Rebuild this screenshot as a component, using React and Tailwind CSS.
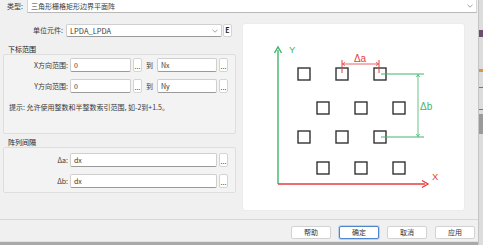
import React from 'react';

const Chevron = () => (
  <svg width="6" height="4" viewBox="0 0 6 4" className="shrink-0">
    <path d="M0.5 0.8 L3 3.2 L5.5 0.8" fill="none" stroke="#8a8a8a" strokeWidth="0.8" />
  </svg>
);

const Field = ({ value, className }) => (
  <div className={`h-[14px] bg-white border border-[#cfcfcf] border-b-[#9a9a9a] rounded-[2px] flex items-center px-[3px] text-[7px] text-[#333] ${className}`}>
    {value}
  </div>
);

const Dots = () => (
  <div className="w-[9px] h-[14px] ml-[2px] bg-white border border-[#d4d4d4] rounded-[2px] flex items-end justify-center pb-[1px] text-[7px] leading-[7px] text-[#333]">
    ...
  </div>
);

const Diagram = () => {
  const green = '#3fb56c';
  const red = '#e63d3f';
  const squares = [
    [55, 44], [93, 44], [131, 44],
    [74, 78], [112, 78], [150, 78],
    [55, 107], [93, 107], [131, 107],
    [74, 138], [112, 138], [150, 138],
  ];
  return (
    <svg width="223" height="188" viewBox="0 0 223 188">
      {/* axes */}
      <line x1="35" y1="160" x2="35" y2="26" stroke={green} strokeWidth="1.4" />
      <path d="M31.5 29 L35 23 L38.5 29" fill="none" stroke={green} strokeWidth="1.4" />
      <text x="46" y="29" fontSize="9.5" fill={green} fontFamily="Liberation Sans, sans-serif">Y</text>
      <line x1="35" y1="160" x2="182" y2="160" stroke={red} strokeWidth="1.4" />
      <path d="M179 156.5 L185 160 L179 163.5" fill="none" stroke={red} strokeWidth="1.4" />
      <text x="189" y="156" fontSize="9.5" fill={red} fontFamily="Liberation Sans, sans-serif">X</text>

      {squares.map(([x, y], i) => (
        <rect key={i} x={x} y={y} width="12" height="12" fill="none" stroke="#333" strokeWidth="1.4" />
      ))}

      {/* delta a */}
      <line x1="99" y1="36" x2="99" y2="49" stroke={red} strokeWidth="1" />
      <line x1="136" y1="36" x2="136" y2="49" stroke={red} strokeWidth="1" />
      <line x1="99.5" y1="40" x2="135.5" y2="40" stroke={red} strokeWidth="0.8" />
      <path d="M102 38.3 L99.5 40 L102 41.7" fill="none" stroke={red} strokeWidth="0.8" />
      <path d="M133 38.3 L135.5 40 L133 41.7" fill="none" stroke={red} strokeWidth="0.8" />
      <text x="117" y="38" fontSize="10" fill={red} textAnchor="middle" fontFamily="Liberation Sans, sans-serif">Δa</text>

      {/* delta b */}
      <line x1="138" y1="50" x2="181" y2="50" stroke={green} strokeWidth="1" />
      <line x1="138" y1="113" x2="181" y2="113" stroke={green} strokeWidth="1" />
      <line x1="175" y1="50.5" x2="175" y2="112.5" stroke={green} strokeWidth="0.8" />
      <path d="M173.3 53 L175 50.5 L176.7 53" fill="none" stroke={green} strokeWidth="0.8" />
      <path d="M173.3 110 L175 112.5 L176.7 110" fill="none" stroke={green} strokeWidth="0.8" />
      <text x="177" y="86" fontSize="10" fill={green} fontFamily="Liberation Sans, sans-serif">Δb</text>
    </svg>
  );
};

const Button = ({ label, primary }) => (
  <div
    className={`w-[40px] h-[13px] rounded-[2px] bg-white flex items-center justify-center text-[7px] text-[#333] ${
      primary ? 'border border-[#4f86cc] shadow-[0_0_0_1px_#bcd3ee]' : 'border border-[#d2d2d2]'
    }`}
  >
    {label}
  </div>
);

export default function App() {
  return (
    <div className="w-[483px] h-[245px] bg-[#f0f0f0] flex overflow-hidden font-['Noto_Sans_CJK_SC',sans-serif] text-[7px] text-[#3a3a3a]">
      <div className="w-[479px] h-full flex flex-col border-r border-[#c4c4c4]">
        {/* type row */}
        <div className="h-[13px] flex items-center shrink-0">
          <span className="w-[27px] pl-[7px] leading-[13px]">类型:</span>
          <div className="w-[450px] h-[13px] bg-white border border-t-0 border-[#d6d6d6] border-b-[#b8b8b8] flex items-center justify-between pl-[3px] pr-[3px]">
            <span>三角形栅格矩形边界平面阵</span>
            <Chevron />
          </div>
        </div>

        {/* body */}
        <div className="flex-1 flex">
          <div className="w-[236px] pt-[11px] flex flex-col">
            <div className="h-[13px] flex items-center">
              <span className="w-[63px] text-right">单位元件:</span>
              <div className="ml-[3px] w-[156px] h-[13px] bg-white border border-[#cfcfcf] border-b-[#9a9a9a] rounded-[2px] flex items-center justify-between px-[3px] text-[7.5px]">
                <span>LPDA_LPDA</span>
                <Chevron />
              </div>
              <div className="ml-px w-[9px] h-[13px] bg-white border border-[#d4d4d4] rounded-[2px] flex items-center justify-center font-bold text-[7px] text-[#222]">
                E
              </div>
            </div>

            <div className="mt-[7px] h-[10px] leading-[10px] pl-[8px] text-[#222]">下标范围</div>
            <div className="ml-[3px] w-[233px] h-[80px] border border-[#dedede] bg-[#f3f3f3] rounded-[2px] pt-[3px] flex flex-col">
              <div className="flex items-center">
                <span className="w-[64px] text-right">X方向范围:</span>
                <Field value="0" className="ml-[2px] w-[61px]" />
                <Dots />
                <span className="ml-[4px] w-[11px]">到</span>
                <Field value="Nx" className="w-[60px]" />
                <Dots />
              </div>
              <div className="flex items-center mt-[7px]">
                <span className="w-[64px] text-right">Y方向范围:</span>
                <Field value="0" className="ml-[2px] w-[61px]" />
                <Dots />
                <span className="ml-[4px] w-[11px]">到</span>
                <Field value="Ny" className="w-[60px]" />
                <Dots />
              </div>
              <div className="mt-[9px] pl-[5px] leading-[10px]">提示: 允许使用整数和半整数索引范围, 如-2到+1.5。</div>
            </div>

            <div className="mt-[4px] h-[9px] leading-[9px] pl-[8px] text-[#222]">阵列间隔</div>
            <div className="ml-[3px] w-[233px] h-[46px] border border-[#dedede] bg-[#f3f3f3] rounded-[2px] pt-[5px] flex flex-col">
              <div className="flex items-center">
                <span className="w-[64px] text-right">Δa:</span>
                <Field value="dx" className="ml-[2px] w-[147px]" />
                <Dots />
              </div>
              <div className="flex items-center mt-[7px]">
                <span className="w-[64px] text-right">Δb:</span>
                <Field value="dx" className="ml-[2px] w-[147px]" />
                <Dots />
              </div>
            </div>
          </div>

          <div className="ml-[6px] mt-[10px] w-[223px] h-[188px] bg-white rounded-[3px] border border-[#ececec]">
            <Diagram />
          </div>
        </div>

        {/* button bar */}
        <div className="h-[26px] shrink-0 border-t border-[#d8d8d8] border-b-[3px] border-b-[#a9a9a9] flex flex-col">
          <div className="flex-1 flex justify-end items-start gap-[8px] pt-[6px] pr-[3px] border-b border-[#e2e2e2]">
            <Button label="帮助" />
            <Button label="确定" primary />
            <Button label="取消" />
            <Button label="应用" />
          </div>
        </div>
      </div>

      {/* desktop peeking behind the window */}
      <div className="w-[4px] h-full bg-[#dcdcdc] flex flex-col">
        <div className="h-[30px]" />
        <div className="h-[7px] bg-[#6b4f6a]" />
        <div className="h-[32px]" />
        <div className="h-[3px] bg-[#d9934a]" />
        <div className="h-[15px]" />
        <div className="h-px bg-[#777]" />
        <div className="h-[21px]" />
        <div className="h-px bg-[#777]" />
        <div className="h-[4px]" />
        <div className="h-[20px] bg-[#9a9a9a]" />
      </div>
    </div>
  );
}
